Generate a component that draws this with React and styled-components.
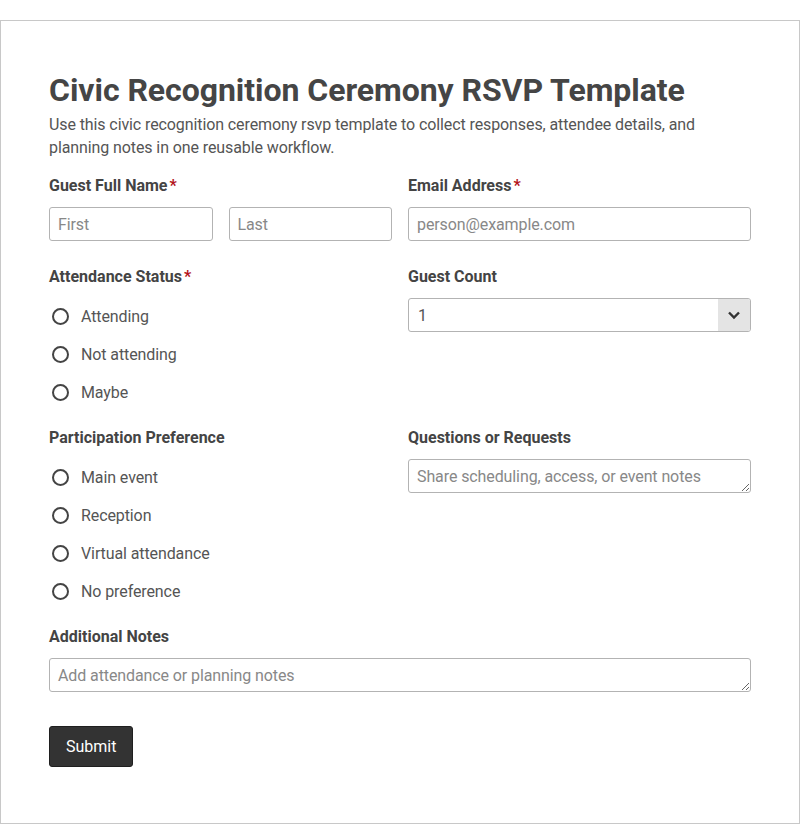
import React from "react";
import styled, { createGlobalStyle } from "styled-components";

const GlobalStyle = createGlobalStyle`
  * { box-sizing: border-box; }
  body {
    margin: 0;
    background: #fff;
    font-family: Roboto, "Liberation Sans", Arial, sans-serif;
    color: #444;
  }
`;

const Card = styled.form`
  margin-top: 20px;
  width: 800px;
  border: 1px solid #c8c8c8;
  background: #fff;
  padding: 50px 48px 56px;
`;

const Title = styled.h1`
  margin: 0;
  font-size: 32px;
  line-height: 38px;
  font-weight: 700;
  letter-spacing: -0.05px;
  color: #454545;
`;

const Intro = styled.p`
  margin: 4px 0 16px;
  font-size: 16px;
  line-height: 23px;
  letter-spacing: -0.1px;
  color: #555;
`;

const Row = styled.div`
  display: grid;
  grid-template-columns: ${(p) => (p.$single ? "1fr" : "1fr 1fr")};
  column-gap: 16px;
  margin-bottom: ${(p) => p.$gap || 24}px;
`;

const Field = styled.div`
  display: flex;
  flex-direction: column;
`;

const Label = styled.div`
  font-size: 16px;
  line-height: 20px;
  font-weight: 700;
  color: #444;
  padding-top: 1px;
  margin-bottom: 11px;
`;

const Req = styled.span`
  color: #b3131b;
  margin-left: 2px;
`;

const Pair = styled.div`
  display: grid;
  grid-template-columns: 1fr 1fr;
  gap: 16px;
`;

const Input = styled.input`
  width: 100%;
  height: 34px;
  padding: 0 8px;
  border: 1px solid #b3b3b3;
  border-radius: 3px;
  font: inherit;
  font-size: 16px;
  letter-spacing: -0.1px;
  color: #444;
  background: #fff;
  outline: none;
  &::placeholder { color: #888; }
`;

const Area = styled.textarea`
  display: block;
  width: 100%;
  height: 34px;
  padding: 7px 8px 5px;
  border: 1px solid #b3b3b3;
  border-radius: 3px;
  font: inherit;
  font-size: 16px;
  line-height: 20px;
  letter-spacing: -0.1px;
  color: #444;
  resize: vertical;
  overflow: hidden;
  outline: none;
  &::placeholder { color: #888; }
`;

const SelectBox = styled.div`
  display: flex;
  align-items: stretch;
  height: 34px;
  border: 1px solid #b3b3b3;
  border-radius: 3px;
  overflow: hidden;
`;

const SelectValue = styled.div`
  flex: 1;
  display: flex;
  align-items: center;
  padding: 0 9px;
  font-size: 16px;
  color: #555;
`;

const SelectArrow = styled.div`
  width: 32px;
  background: #e4e4e4;
  display: flex;
  align-items: center;
  justify-content: center;
`;

const RadioList = styled.div`
  display: flex;
  flex-direction: column;
  gap: 14px;
  padding-top: 6px;
`;

const Option = styled.label`
  display: flex;
  align-items: center;
  height: 24px;
  font-size: 16px;
  letter-spacing: -0.1px;
  color: #555;
`;

const Circle = styled.span`
  width: 17px;
  height: 17px;
  margin: 0 12px 0 3px;
  border: 2px solid #444;
  border-radius: 50%;
  flex: none;
`;

const Button = styled.button`
  margin-top: 10px;
  height: 41px;
  padding: 0 16px;
  background: #333;
  color: #fff;
  border: 1px solid #1f1f1f;
  border-radius: 3px;
  font: inherit;
  font-size: 16px;
`;

const Radios = ({ items }) => (
  <RadioList>
    {items.map((t) => (
      <Option key={t}>
        <Circle />
        {t}
      </Option>
    ))}
  </RadioList>
);

const App = () => {
  return (
    <>
      <GlobalStyle />
      <Card onSubmit={(e) => e.preventDefault()}>
        <Title>Civic Recognition Ceremony RSVP Template</Title>
        <Intro>
          Use this civic recognition ceremony rsvp template to collect responses, attendee details, and
          planning notes in one reusable workflow.
        </Intro>

        <Row $gap={25}>
          <Field>
            <Label>
              Guest Full Name<Req>*</Req>
            </Label>
            <Pair>
              <Input placeholder="First" />
              <Input placeholder="Last" />
            </Pair>
          </Field>
          <Field>
            <Label>
              Email Address<Req>*</Req>
            </Label>
            <Input placeholder="person@example.com" />
          </Field>
        </Row>

        <Row $gap={23}>
          <Field>
            <Label>
              Attendance Status<Req>*</Req>
            </Label>
            <Radios items={["Attending", "Not attending", "Maybe"]} />
          </Field>
          <Field>
            <Label>Guest Count</Label>
            <SelectBox>
              <SelectValue>1</SelectValue>
              <SelectArrow>
                <svg width="14" height="14" viewBox="0 0 14 14">
                  <path d="M2 4.5 L7 9.5 L12 4.5" fill="none" stroke="#333" strokeWidth="2.4" />
                </svg>
              </SelectArrow>
            </SelectBox>
          </Field>
        </Row>

        <Row $gap={23}>
          <Field>
            <Label>Participation Preference</Label>
            <Radios items={["Main event", "Reception", "Virtual attendance", "No preference"]} />
          </Field>
          <Field>
            <Label>Questions or Requests</Label>
            <Area placeholder="Share scheduling, access, or event notes" />
          </Field>
        </Row>

        <Row $single $gap={24}>
          <Field>
            <Label>Additional Notes</Label>
            <Area placeholder="Add attendance or planning notes" />
          </Field>
        </Row>

        <Button type="submit">Submit</Button>
      </Card>
    </>
  );
};

export default App;
